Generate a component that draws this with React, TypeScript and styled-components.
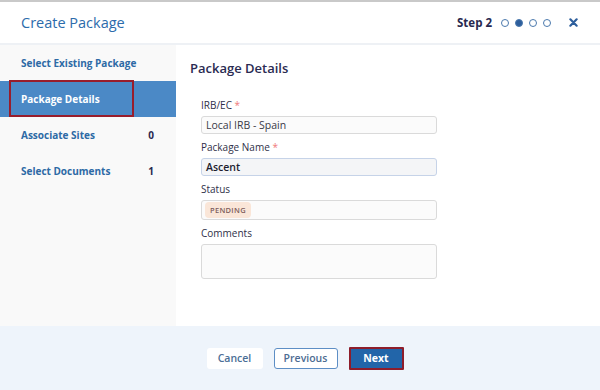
import React from "react";
import styled, { createGlobalStyle } from "styled-components";

const Global = createGlobalStyle`
  html, body { margin: 0; padding: 0; background: #ffffff; }
  body { font-family: "Open Sans", "Noto Sans", sans-serif; }
  * { box-sizing: border-box; }
`;

const Frame = styled.div`
  width: 600px;
  height: 390px;
  display: flex;
  flex-direction: column;
  border-top: 2px solid #c9c9c9;
  background: #fff;
  overflow: hidden;
`;

const Header = styled.header`
  height: 43px;
  flex: none;
  display: flex;
  align-items: center;
  padding: 0 22px 0 21px;
  border-bottom: 2px solid #eef1f5;
`;

const Title = styled.h1`
  margin: 0;
  font-size: 14.5px;
  font-weight: 500;
  color: #2c6bab;
  flex: 1;
`;

const StepLabel = styled.span`
  font-size: 11.5px;
  font-weight: 700;
  color: #27284f;
  margin-right: 9px;
`;

const Dots = styled.div`
  display: flex;
  gap: 6px;
  align-items: center;
  margin-right: 18px;
`;

const Dot = styled.span<{ $on?: boolean }>`
  width: 8px;
  height: 8px;
  border-radius: 50%;
  border: 1.3px solid #4b79ad;
  background: ${(p) => (p.$on ? "#2d5e9c" : "#fff")};
`;

const Close = styled.svg`
  width: 9px;
  height: 9px;
  display: block;
`;

const Body = styled.div`
  flex: 1;
  display: flex;
  min-height: 0;
`;

const Sidebar = styled.nav`
  width: 176px;
  flex: none;
  background: #f9f9f9;
  display: flex;
  flex-direction: column;
`;

const NavRow = styled.div<{ $active?: boolean }>`
  height: 36px;
  display: flex;
  align-items: center;
  padding: 0 22px 0 21px;
  background: ${(p) => (p.$active ? "#4b89c6" : "transparent")};
  font-size: 10px;
  font-weight: 700;
  color: ${(p) => (p.$active ? "#ffffff" : "#2d6aa5")};
`;

const ActiveRow = styled(NavRow)`
  padding-left: 9px;
`;

const Marked = styled.span`
  width: 125px;
  height: 37px;
  margin-top: -1px;
  display: flex;
  align-items: center;
  padding-left: 10px;
  border: 2px solid #981d2c;
`;

const NavText = styled.span`
  flex: 1;
`;

const Count = styled.span`
  color: #2a2850;
  font-weight: 700;
`;

const Content = styled.main`
  flex: 1;
  padding: 13px 0 0 14px;
`;

const SectionTitle = styled.h2`
  margin: 0 0 20px;
  font-size: 13px;
  font-weight: 600;
  color: #2a2b52;
  line-height: 20px;
`;

const Form = styled.div`
  margin-left: 11px;
  width: 236px;
  display: flex;
  flex-direction: column;
  gap: 6px;
`;

const Field = styled.div`
  display: flex;
  flex-direction: column;
  gap: 3px;
`;

const Label = styled.label`
  font-size: 10px;
  line-height: 15px;
  color: #2f3048;
`;

const Req = styled.span`
  color: #f07a7a;
`;

const Input = styled.div<{ $focus?: boolean; $tall?: boolean }>`
  height: ${(p) => (p.$tall ? "35px" : "18px")};
  border: 1px solid ${(p) => (p.$focus ? "#c6d3e8" : "#dadada")};
  border-radius: 3px;
  background: ${(p) => (p.$focus ? "#f4f5f7" : "#fbfbfb")};
  display: flex;
  align-items: center;
  padding: 0 4px;
  font-size: 10.5px;
  color: ${(p) => (p.$focus ? "#1e1e30" : "#3a3a48")};
  font-weight: ${(p) => (p.$focus ? 600 : 400)};
`;

const StatusBox = styled(Input)`
  height: 20px;
  padding: 0 3px;
`;

const Pill = styled.span`
  background: #fae6d8;
  color: #7d5e5c;
  font-size: 7.5px;
  font-weight: 600;
  letter-spacing: 0.3px;
  padding: 3px 5px;
  border-radius: 4px;
  line-height: 10px;
`;

const Footer = styled.footer`
  height: 64px;
  flex: none;
  background: #eef4fb;
  display: flex;
  align-items: center;
  justify-content: center;
  gap: 11px;
  padding-left: 10px;
`;

const Button = styled.button<{ $kind: "plain" | "outline" | "primary" }>`
  font-family: inherit;
  font-size: 10.5px;
  font-weight: 600;
  height: ${(p) => (p.$kind === "primary" ? "23px" : "21px")};
  border-radius: ${(p) => (p.$kind === "primary" ? "1px" : "3px")};
  padding: 0;
  cursor: pointer;
  ${(p) =>
    p.$kind === "plain"
      ? "width: 56px; background: #fff; border: none; color: #4b6e96;"
      : p.$kind === "outline"
      ? "width: 64px; background: #fff; border: 1px solid #5d8ec5; color: #4d6c92;"
      : "width: 55px; background: #2265a9; border: 2px solid #8e1d2b; color: #fff; font-weight: 700;"}
`;

export default function App() {
  return (
    <>
      <Global />
      <Frame>
        <Header>
          <Title>Create Package</Title>
          <StepLabel>Step 2</StepLabel>
          <Dots>
            <Dot />
            <Dot $on />
            <Dot />
            <Dot />
          </Dots>
          <Close viewBox="0 0 10 10">
            <path d="M1.5 1.5 L8.5 8.5 M8.5 1.5 L1.5 8.5" stroke="#2d5e9c" strokeWidth="2.4" strokeLinecap="round" />
          </Close>
        </Header>
        <Body>
          <Sidebar>
            <NavRow>
              <NavText>Select Existing Package</NavText>
            </NavRow>
            <ActiveRow $active>
              <Marked>Package Details</Marked>
            </ActiveRow>
            <NavRow>
              <NavText>Associate Sites</NavText>
              <Count>0</Count>
            </NavRow>
            <NavRow>
              <NavText>Select Documents</NavText>
              <Count>1</Count>
            </NavRow>
          </Sidebar>
          <Content>
            <SectionTitle>Package Details</SectionTitle>
            <Form>
              <Field>
                <Label>
                  IRB/EC <Req>*</Req>
                </Label>
                <Input>Local IRB - Spain</Input>
              </Field>
              <Field>
                <Label>
                  Package Name <Req>*</Req>
                </Label>
                <Input $focus>Ascent</Input>
              </Field>
              <Field>
                <Label>Status</Label>
                <StatusBox>
                  <Pill>PENDING</Pill>
                </StatusBox>
              </Field>
              <Field>
                <Label>Comments</Label>
                <Input $tall />
              </Field>
            </Form>
          </Content>
        </Body>
        <Footer>
          <Button $kind="plain">Cancel</Button>
          <Button $kind="outline">Previous</Button>
          <Button $kind="primary">Next</Button>
        </Footer>
      </Frame>
    </>
  );
}
